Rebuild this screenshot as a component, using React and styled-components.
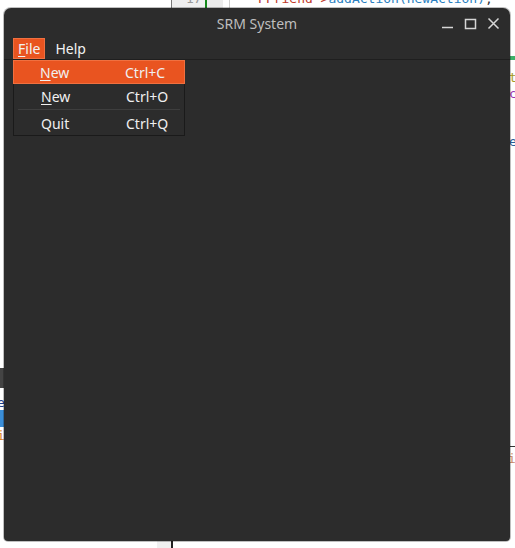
import React from 'react';
import styled, { createGlobalStyle } from 'styled-components';

const Global = createGlobalStyle`
  html, body { margin: 0; padding: 0; background: #ffffff; }
  body { font-family: "Noto Sans", "DejaVu Sans", sans-serif; }
`;

const Desktop = styled.div`
  position: relative;
  width: 515px;
  height: 548px;
  overflow: hidden;
  background: #ffffff;
  padding: 8px 5px 7px 4px;
  box-sizing: border-box;
`;

/* things of the editor behind the window */
const Strip = styled.div`
  position: absolute;
  left: ${p => p.x}px;
  top: ${p => p.y}px;
  width: ${p => p.w}px;
  height: ${p => p.h}px;
  background: ${p => p.bg};
`;

const CodeBit = styled.span`
  position: absolute;
  left: ${p => p.x}px;
  top: ${p => p.y}px;
  font-family: "DejaVu Sans Mono", monospace;
  font-size: 13px;
  line-height: 16px;
  white-space: pre;
  color: ${p => p.c};
`;

const Window = styled.div`
  position: relative;
  height: 100%;
  background: #2c2c2c;
  border-radius: 7px 7px 4px 4px;
  display: flex;
  flex-direction: column;
  box-shadow: 0 0 0 1px rgba(0, 0, 0, 0.25);
`;

const TitleBar = styled.div`
  height: 30px;
  display: grid;
  grid-template-columns: 1fr auto 1fr;
  align-items: center;
  color: #bebebe;
  font-size: 14px;
`;

const Title = styled.div`
  grid-column: 2;
`;

const Controls = styled.div`
  grid-column: 3;
  justify-self: end;
  display: flex;
  align-items: center;
  gap: 10px;
  padding-right: 10px;
`;

const MenuBar = styled.div`
  display: flex;
  align-items: stretch;
  height: 21px;
  padding-left: 9px;
  border-bottom: 1px solid #1f1f1f;
`;

const MenuTitle = styled.div`
  position: relative;
  display: flex;
  align-items: center;
  padding: 0 5px;
  margin-right: 5px;
  font-size: 14px;
  color: #f2f2f2;
  background: ${p => (p.open ? '#e95420' : 'transparent')};
  box-shadow: ${p => (p.open ? 'inset 0 0 0 1px #f07040' : 'none')};
`;

const Mn = styled.span`
  text-decoration: underline;
  text-underline-offset: 2px;
`;

const Dropdown = styled.div`
  position: absolute;
  left: 0;
  top: 22px;
  width: 170px;
  background: #2c2c2c;
  border: 1px solid #1a1a1a;
  display: flex;
  flex-direction: column;
  z-index: 2;
`;

const Item = styled.div`
  display: grid;
  grid-template-columns: 85px 1fr;
  align-items: center;
  height: 24px;
  padding-left: 27px;
  font-size: 14px;
  color: #f0f0f0;
  background: ${p => (p.active ? '#e95420' : 'transparent')};
  box-shadow: ${p => (p.active ? 'inset 0 0 0 1px #f07040' : 'none')};
  margin: ${p => (p.active ? '-1px -1px 0' : '0')};
`;

const Sep = styled.div`
  height: 1px;
  margin: 1px 4px 1px 4px;
  background: #3e3e3e;
`;

const Body = styled.div`
  flex: 1;
`;

const Icon = ({ children }) => (
  <svg width="13" height="13" viewBox="0 0 13 13" fill="none" stroke="#d6d6d6" strokeWidth="1.5">
    {children}
  </svg>
);

export default function App() {
  return (
    <Desktop>
      <Global />
      <Strip x={171} y={0} w={1} h={8} bg="#7a7a7a" />
      <Strip x={172} y={0} w={33} h={8} bg="#efefef" />
      <Strip x={205} y={0} w={2} h={8} bg="#15891a" />
      <Strip x={207} y={0} w={16} h={8} bg="#ececec" />
      <Strip x={229} y={0} w={1} h={8} bg="#cfcfcf" />
      <CodeBit x={186} y={-9} c="#9a9a9a">17</CodeBit>
      <CodeBit x={258} y={-9} c="#c0392b">PFriend-&gt;<span style={{ color: '#2a7fc1' }}>addAction(newAction)</span><span style={{ color: '#333' }}>;</span></CodeBit>
      <Strip x={157} y={541} w={14} h={7} bg="#f0f0f0" />
      <Strip x={171} y={541} w={2} h={7} bg="#222222" />
      <Strip x={0} y={368} w={4} h={20} bg="#444444" />
      <Strip x={0} y={410} w={4} h={17} bg="#3b8ed8" />
      <CodeBit x={-3} y={395} c="#1d3f8a">e</CodeBit>
      <CodeBit x={-3} y={428} c="#d9822b">i</CodeBit>
      <Strip x={510} y={56} w={5} h={4} bg="#3fb06a" />
      <CodeBit x={509} y={70} c="#a59a2a">t</CodeBit>
      <CodeBit x={509} y={86} c="#9b35b5">c</CodeBit>
      <CodeBit x={509} y={134} c="#2a5f9a">e</CodeBit>
      <Strip x={503} y={446} w={12} h={1} bg="#333333" />
      <CodeBit x={508} y={451} c="#c98a6a">il</CodeBit>

      <Window>
        <TitleBar>
          <Title>SRM System</Title>
          <Controls>
            <Icon><path d="M1 10.5h11" /></Icon>
            <Icon><rect x="1.5" y="2.5" width="10" height="9" /></Icon>
            <Icon><path d="M1.5 1.5l10 10M11.5 1.5l-10 10" /></Icon>
          </Controls>
        </TitleBar>
        <MenuBar>
          <MenuTitle open>
            <span><Mn>F</Mn>ile</span>
            <Dropdown>
              <Item active><span><Mn>N</Mn>ew</span><span>Ctrl+C</span></Item>
              <Item><span><Mn>N</Mn>ew</span><span>Ctrl+O</span></Item>
              <Sep />
              <Item><span>Quit</span><span>Ctrl+Q</span></Item>
            </Dropdown>
          </MenuTitle>
          <MenuTitle>Help</MenuTitle>
        </MenuBar>
        <Body />
      </Window>
    </Desktop>
  );
}
